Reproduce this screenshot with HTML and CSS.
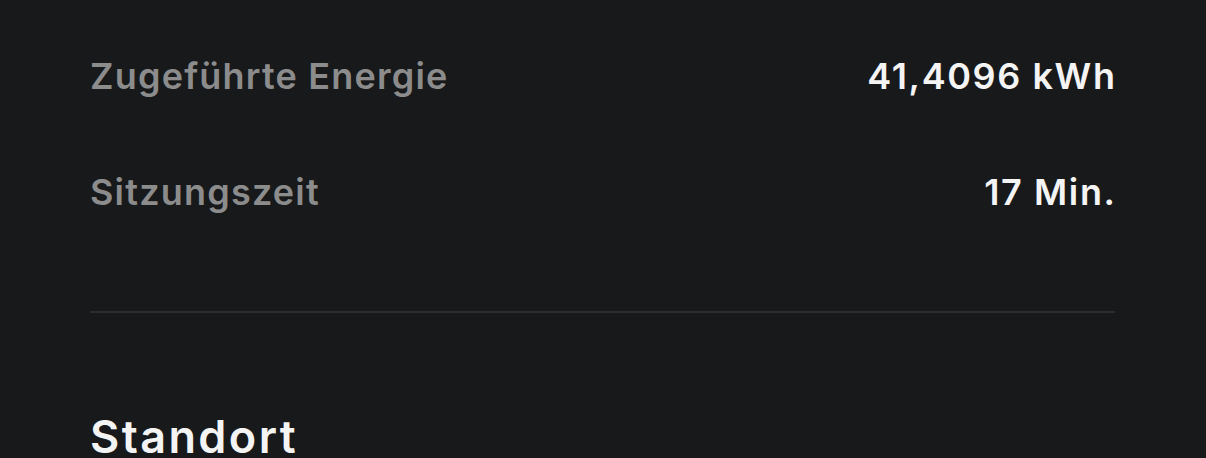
FILE: index.html
```html
<!DOCTYPE html>
<html lang="de">
<head>
<meta charset="utf-8">
<link rel="stylesheet" href="styles.css">
</head>
<body>
<main class="panel">
  <div class="rows">
    <div class="row"><span class="label">Zugeführte Energie</span><span class="value">41,4096 kWh</span></div>
    <div class="row"><span class="label">Sitzungszeit</span><span class="value">17 Min.</span></div>
  </div>
  <hr class="divider">
  <h2 class="section-title">Standort</h2>
</main>
</body>
</html>
```
FILE: styles.css
```css
html, body {
  margin: 0;
  padding: 0;
  background: #18191b;
  height: 100%;
  overflow: hidden;
}
.panel {
  padding: 54px 91px 0 90px;
  font-family: Inter, "Noto Sans", sans-serif;
}
.rows {
  display: flex;
  flex-direction: column;
  gap: 72px;
}
.row {
  display: flex;
  justify-content: space-between;
  align-items: baseline;
  font-size: 36px;
  line-height: 44px;
  font-weight: 600;
  letter-spacing: 1.2px;
}
.label {
  color: #8c8c8d;
}
.value {
  color: #f4f4f4;
  letter-spacing: 1.6px;
  margin-right: -1.6px;
}
.divider {
  margin: 97px 0 0 0;
  border: 0;
  height: 2px;
  background: #2c2d2f;
}
.section-title {
  margin: 98px 0 0 0;
  font-size: 45px;
  line-height: 52px;
  font-weight: 600;
  letter-spacing: 2.4px;
  color: #f4f4f4;
}
```
